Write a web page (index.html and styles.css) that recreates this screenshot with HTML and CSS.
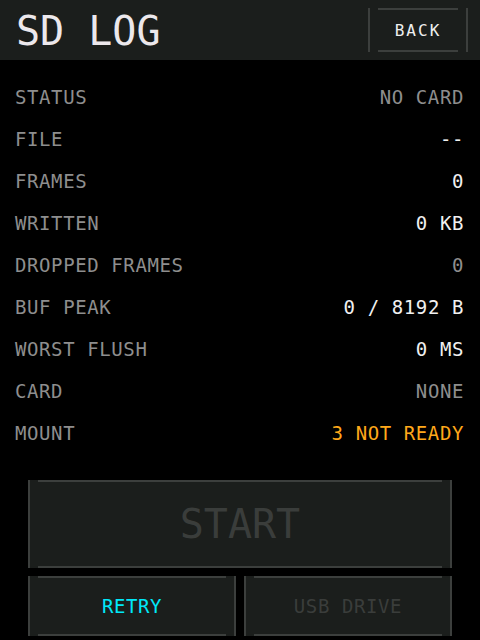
FILE: index.html
```html
<!DOCTYPE html>
<html lang="en">
<head>
    <meta charset="UTF-8">
    <meta name="viewport" content="width=device-width, initial-scale=1.0">
    <title>SD Log</title>
    <link rel="stylesheet" href="styles.css">
</head>
<body>
    <div id="screen">
        <!-- Header -->
        <header class="header">
            <h1 class="title">SD LOG</h1>
            <button class="btn btn-back">BACK</button>
        </header>

        <!-- Stats -->
        <div class="stats">
            <div class="row"><span class="label">STATUS</span><span class="value dim">NO CARD</span></div>
            <div class="row"><span class="label">FILE</span><span class="value">--</span></div>
            <div class="row"><span class="label">FRAMES</span><span class="value">0</span></div>
            <div class="row"><span class="label">WRITTEN</span><span class="value">0 KB</span></div>
            <div class="row"><span class="label">DROPPED FRAMES</span><span class="value dim">0</span></div>
            <div class="row"><span class="label">BUF PEAK</span><span class="value">0 / 8192 B</span></div>
            <div class="row"><span class="label">WORST FLUSH</span><span class="value">0 MS</span></div>
            <div class="row"><span class="label">CARD</span><span class="value dim">NONE</span></div>
            <div class="row"><span class="label">MOUNT</span><span class="value warn">3 NOT READY</span></div>
        </div>

        <!-- Actions -->
        <div class="actions">
            <button class="btn btn-start" disabled>START</button>
            <div class="action-row">
                <button class="btn btn-small btn-retry">RETRY</button>
                <button class="btn btn-small" disabled>USB DRIVE</button>
            </div>
        </div>
    </div>
</body>
</html>
```

FILE: styles.css
```css
/* Global Styles */
body {
    margin: 0;
    padding: 0;
    background: #000;
    font-family: 'DejaVu Sans Mono', 'Liberation Mono', monospace;
    color: #f0f0f0;
}

#screen {
    width: 480px;
    height: 640px;
    overflow: hidden;
}

/* Header */
.header {
    height: 60px;
    background: #1b1e1c;
    display: flex;
    align-items: center;
    justify-content: space-between;
    padding: 0 12px 0 16px;
}

.title {
    margin: 0;
    padding-top: 2px;
    font-size: 40px;
    font-weight: normal;
    line-height: 1;
    color: #ece8ec;
}

/* Buttons: side borders full height, top/bottom lines inset */
.btn {
    display: flex;
    align-items: center;
    justify-content: center;
    padding: 0;
    font-family: inherit;
    border: none;
    border-left: 2px solid #3c3f3d;
    border-right: 2px solid #3c3f3d;
    background:
        linear-gradient(#3c3f3d, #3c3f3d) center top / calc(100% - 16px) 2px no-repeat,
        linear-gradient(#3c3f3d, #3c3f3d) center bottom / calc(100% - 16px) 2px no-repeat,
        #1b1e1c;
    color: #3a3d3b;
}

.btn-back {
    width: 100px;
    height: 44px;
    font-size: 16px;
    letter-spacing: 2px;
    color: #eeeeee;
}

/* Stats list */
.stats {
    padding: 16px 16px 0 15px;
}

.row {
    height: 42px;
    display: flex;
    align-items: center;
    justify-content: space-between;
    font-size: 19px;
    letter-spacing: 0.6px;
}

.label {
    color: #8e8e8e;
}

.value {
    color: #f0f0f0;
}

.value.dim {
    color: #8e8e8e;
}

.value.warn {
    color: #ffa81a;
}

/* Actions */
.actions {
    margin-top: 26px;
    padding: 0 28px;
    display: flex;
    flex-direction: column;
    gap: 8px;
}

.btn-start {
    height: 88px;
    font-size: 40px;
}

.action-row {
    display: grid;
    grid-template-columns: 1fr 1fr;
    gap: 8px;
}

.btn-small {
    height: 60px;
    font-size: 19px;
    letter-spacing: 0.6px;
}

.btn-retry {
    color: #00e8f8;
}
```
